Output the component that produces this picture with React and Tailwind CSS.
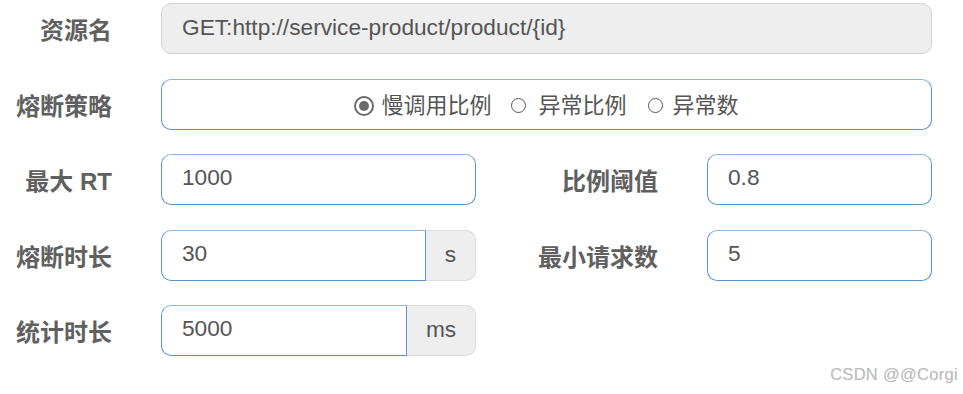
import React from 'react';

const font = { fontFamily: '"Liberation Sans", "Noto Sans CJK SC", sans-serif' };

const Label = ({ children, w = 'w-[112px]' }) => (
    <div className={`${w} shrink-0 text-right text-[24px] font-bold text-[#606060] pt-[5px] leading-none`}>{children}</div>
);

const Radio = ({ checked, label, circle, gap }) => (
    <div className="flex items-center">
        {checked ? (
            <span className="w-[20px] h-[20px] rounded-full border-[2px] border-[#6a6a6a] flex items-center justify-center">
                <span className="w-[10px] h-[10px] rounded-full bg-[#6a6a6a]" />
            </span>
        ) : (
            <span className={`${circle} rounded-full border-[1.5px] border-[#555]`} />
        )}
        <span className={`${gap} text-[22px] text-[#555] leading-none`}>{label}</span>
    </div>
);

const App = () => {
    return (
        <div className="relative w-[963px] h-[394px] bg-white overflow-hidden" style={font}>
            <div className="flex flex-col gap-[24.5px] pt-[3px]">
                <div className="flex items-center">
                    <Label>资源名</Label>
                    <div className="ml-[49px] w-[771px] h-[51px] rounded-[10px] border border-[#d4d4d4] bg-[#eeeeee] flex items-center px-[20px] pb-[3px] text-[22.7px] text-[#555]">
                        GET:http://service-product/product/{'{id}'}
                    </div>
                </div>

                <div className="flex items-center">
                    <Label>熔断策略</Label>
                    <div className="ml-[49px] w-[771px] h-[51px] rounded-[10px] border border-[#5b93cf] border-t-[#8db5e0] flex items-center justify-center pt-[3px]">
                        <Radio checked label="慢调用比例" gap="ml-[7px]" />
                        <Radio label="异常比例" circle="w-[15px] h-[15px] ml-[20px]" gap="ml-[12px]" />
                        <Radio label="异常数" circle="w-[15px] h-[15px] ml-[21px]" gap="ml-[10px]" />
                    </div>
                </div>

                <div className="flex items-center">
                    <Label>最大 RT</Label>
                    <div className="ml-[49px] w-[315px] h-[51px] rounded-[10px] border border-[#5b93cf] border-t-[#8db5e0] flex items-center px-[20px] pb-[4px] text-[22.7px] text-[#555]">1000</div>
                    <Label w="w-[182px]">比例阈值</Label>
                    <div className="ml-[49px] w-[225px] h-[51px] rounded-[10px] border border-[#5b93cf] border-t-[#8db5e0] flex items-center px-[20px] pb-[4px] text-[22.7px] text-[#555]">0.8</div>
                </div>

                <div className="flex items-center">
                    <Label>熔断时长</Label>
                    <div className="ml-[49px] w-[315px] h-[51px] flex">
                        <div className="flex-1 rounded-l-[10px] border border-[#5b93cf] border-t-[#8db5e0] flex items-center px-[20px] pb-[4px] text-[22.7px] text-[#555]">30</div>
                        <div className="w-[50px] rounded-r-[10px] border border-l-0 border-[#dcdcdc] bg-[#eeeeee] flex items-center justify-center pb-[2px] text-[22.7px] text-[#555]">s</div>
                    </div>
                    <Label w="w-[182px]">最小请求数</Label>
                    <div className="ml-[49px] w-[225px] h-[51px] rounded-[10px] border border-[#5b93cf] border-t-[#8db5e0] flex items-center px-[20px] pb-[4px] text-[22.7px] text-[#555]">5</div>
                </div>

                <div className="flex items-center">
                    <Label>统计时长</Label>
                    <div className="ml-[49px] w-[315px] h-[51px] flex">
                        <div className="flex-1 rounded-l-[10px] border border-[#5b93cf] border-t-[#8db5e0] flex items-center px-[20px] pb-[4px] text-[22.7px] text-[#555]">5000</div>
                        <div className="w-[69px] rounded-r-[10px] border border-l-0 border-[#dcdcdc] bg-[#eeeeee] flex items-center justify-center pb-[2px] text-[22.7px] text-[#555]">ms</div>
                    </div>
                </div>
            </div>

            <div className="absolute right-[5px] bottom-[7px] text-[16.5px] text-[#bdbdbd] tracking-[0.3px]" style={{ textShadow: '0 0 1px #e0e0e0' }}>
                CSDN @@Corgi
            </div>
        </div>
    );
};

export default App;
